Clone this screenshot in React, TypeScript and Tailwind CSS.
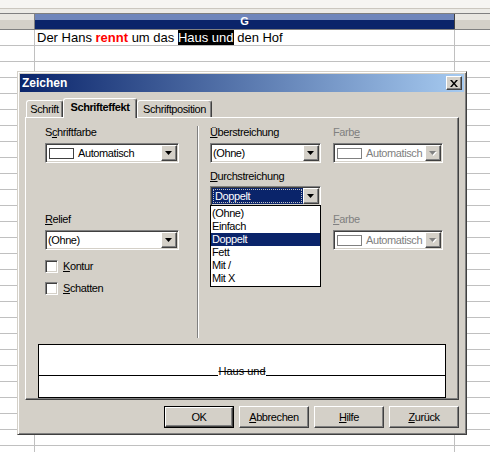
import type { ReactNode } from 'react'

const sunken =
  'border border-t-[#808080] border-l-[#808080] border-r-white border-b-white shadow-[inset_1px_1px_#404040,inset_-1px_-1px_#d4d0c8]'
const raised =
  'border border-t-white border-l-white border-r-[#404040] border-b-[#404040] shadow-[inset_-1px_-1px_#808080]'

const rows = Array.from({ length: 27 }, (_, i) => i)

function Arrow ({ disabled }: { disabled?: boolean }) {
  return (
    <svg width="8" height="5" viewBox="0 0 8 5">
      {disabled && <path d="M1 1h7l-3.5 4z" fill="#ffffff" />}
      <path d="M0 0h7l-3.5 4z" fill={disabled ? '#808080' : '#000000'} />
    </svg>
  )
}

function Combo ({ children, disabled, focused }: { children: ReactNode, disabled?: boolean, focused?: boolean }) {
  return (
    <div className={`flex h-[20px] w-full bg-white p-[1px] ${sunken}`}>
      <div className={`flex flex-1 items-center min-w-0 overflow-hidden whitespace-nowrap ${disabled ? 'text-[#808080]' : 'text-black'}`}>
        {focused
          ? (
            <div className="flex h-full flex-1 items-center bg-[#0a246a] p-[1px] text-white">
              <div className="flex h-full flex-1 items-center border border-dotted border-[#c0c0c0] pl-[1px]">{children}</div>
            </div>
            )
          : children}
      </div>
      <div className={`flex h-full w-[16px] shrink-0 items-center justify-center bg-[#d4d0c8] ${raised}`}>
        <Arrow disabled={disabled} />
      </div>
    </div>
  )
}

function ColorValue ({ disabled }: { disabled?: boolean }) {
  return (
    <div className="flex items-center gap-[4px] pl-[2px]">
      <span className={`h-[11px] w-[25px] shrink-0 border ${disabled ? 'border-[#808080]' : 'border-[#404040]'} bg-white`} />
      <span>Automatisch</span>
    </div>
  )
}

function Label ({ pre = '', u, post = '', disabled }: { pre?: string, u: string, post?: string, disabled?: boolean }) {
  return (
    <div className={`h-[13px] leading-[13px] ${disabled ? 'text-[#808080]' : 'text-black'}`}>
      {pre}<span className="underline underline-offset-[1px]">{u}</span>{post}
    </div>
  )
}

function Check ({ u, post }: { u: string, post: string }) {
  return (
    <div className="flex h-[13px] items-center gap-[5px]">
      <span className={`h-[13px] w-[13px] bg-white ${sunken}`} />
      <span className="leading-[13px]">
        <span className="underline underline-offset-[1px]">{u}</span>{post}
      </span>
    </div>
  )
}

function Tab ({ children, active, w }: { children: ReactNode, active?: boolean, w: string }) {
  return (
    <div
      className={`flex items-center justify-center rounded-t-[3px] border border-b-0 border-t-white border-l-white border-r-[#404040] bg-[#d4d0c8] shadow-[inset_-1px_0_#808080] ${w} ${
        active ? 'relative z-10 h-[20px] pb-[2px] font-bold' : 'mb-px h-[17px]'
      }`}
    >
      {children}
    </div>
  )
}

function Button ({ u = '', post, isDefault }: { u?: string, post: string, isDefault?: boolean }) {
  return (
    <div className={`h-[22px] w-[70px] ${isDefault ? 'border border-black' : ''}`}>
      <div className={`flex h-full w-full items-center justify-center bg-[#d4d0c8] ${raised}`}>
        <span>
          {u && <span className="underline underline-offset-[1px]">{u}</span>}{post}
        </span>
      </div>
    </div>
  )
}

const strikeOptions = ['(Ohne)', 'Einfach', 'Doppelt', 'Fett', 'Mit /', 'Mit X']

export default function App () {
  return (
    <div className="relative h-[452px] w-[490px] overflow-hidden bg-white font-['Liberation_Sans',Arial,sans-serif]">
      {/* spreadsheet behind the dialog */}
      <div className="h-[8px] bg-[#f6f5f2]" />
      <div className="h-px bg-[#cbc7bf]" />
      <div className="h-[4px] bg-[#ecebe6]" />
      <div className="flex h-[17px] border-t border-b border-[#808080]">
        <div className="w-[35px] border-r border-[#808080] bg-[linear-gradient(#e9e7e1_0,#e9e7e1_6px,#d4d0c8_6px)]" />
        <div className="flex w-[420px] items-center justify-center border-r border-[#404040] bg-[linear-gradient(#6f86bb_0,#6f86bb_6px,#0a246a_6px)] text-[11px] font-bold text-white">
          G
        </div>
        <div className="flex-1 bg-[linear-gradient(#e9e7e1_0,#e9e7e1_6px,#d4d0c8_6px)]" />
      </div>
      {rows.map((r) => (
        <div key={r} className="flex h-[16px] border-b border-[#c0c0c0] first:h-[15px]">
          <div className="w-[35px] border-r border-[#c0c0c0]" />
          <div className="flex w-[420px] items-center border-r border-[#c0c0c0] pl-[2px] text-[13px] leading-[15px] text-black">
            {r === 0 && (
              <span className="whitespace-pre">
                Der Hans <span className="font-bold text-[#ff0000]">rennt</span> um das{' '}
                <span className="bg-black text-white">Haus und</span> den Hof
              </span>
            )}
          </div>
          <div className="flex-1" />
        </div>
      ))}

      {/* Zeichen dialog */}
      <div className="absolute left-[17px] top-[71px] flex h-[364px] w-[450px] flex-col border border-t-[#d4d0c8] border-l-[#d4d0c8] border-r-[#404040] border-b-[#404040] bg-[#d4d0c8] p-[2px] text-[11px] tracking-[-0.4px] text-black shadow-[inset_1px_1px_#ffffff,inset_-1px_-1px_#808080]">
        <div className="flex h-[18px] items-center justify-between bg-[linear-gradient(90deg,#0a246a,#a6caf0)] pl-[2px] pr-[2px]">
          <span className="text-[12px] font-bold tracking-normal text-white">Zeichen</span>
          <div className={`flex h-[14px] w-[16px] items-center justify-center bg-[#d4d0c8] ${raised}`}>
            <svg width="8" height="7" viewBox="0 0 8 7">
              <path d="M0 0h2l2 2.5 2-2.5h2l-3 3.5 3 3.5h-2l-2-2.5-2 2.5h-2l3-3.5z" fill="#000" />
            </svg>
          </div>
        </div>

        <div className="mt-[6px] ml-[6px] -mb-px flex h-[20px] items-end">
          <Tab w="w-[37px]">Schrift</Tab>
          <Tab w="w-[74px]" active>Schrifteffekt</Tab>
          <Tab w="w-[75px]">Schriftposition</Tab>
        </div>

        <div className="mx-[5px] flex h-[283px] flex-col border border-t-white border-l-white border-r-[#404040] border-b-[#404040] shadow-[inset_-1px_-1px_#808080]">
          <div className="mt-[8px] flex h-[212px] pl-[19px]">
            {/* left column */}
            <div className="flex w-[134px] flex-col">
              <Label pre="S" u="c" post="hriftfarbe" />
              <div className="mt-[4px]">
                <Combo><ColorValue /></Combo>
              </div>
              <div className="mt-[50px]">
                <Label u="R" post="elief" />
              </div>
              <div className="mt-[4px]">
                <Combo><span className="pl-[1px]">(Ohne)</span></Combo>
              </div>
              <div className="mt-[10px] flex flex-col gap-[9px]">
                <Check u="K" post="ontur" />
                <Check u="S" post="chatten" />
              </div>
            </div>

            <div className="ml-[18px] h-full w-[2px] border-l border-[#808080] bg-white" />

            {/* strike-through and overline */}
            <div className="ml-[11px] flex w-[111px] flex-col">
              <Label u="Ü" post="berstreichung" />
              <div className="mt-[4px]">
                <Combo><span className="pl-[1px]">(Ohne)</span></Combo>
              </div>
              <div className="mt-[7px]">
                <Label u="D" post="urchstreichung" />
              </div>
              <div className="relative mt-[3px]">
                <Combo focused>Doppelt</Combo>
                <div className="absolute left-0 top-[19px] z-20 w-full border border-black bg-white pt-px pb-px">
                  {strikeOptions.map((o) => (
                    <div
                      key={o}
                      className={`h-[13px] pl-[1px] leading-[13px] ${o === 'Doppelt' ? 'bg-[#0a246a] text-white' : ''}`}
                    >
                      {o}
                    </div>
                  ))}
                </div>
              </div>
            </div>

            {/* colours, disabled */}
            <div className="ml-[12px] flex w-[110px] flex-col">
              <Label pre="Farb" u="e" disabled />
              <div className="mt-[4px]">
                <Combo disabled><ColorValue disabled /></Combo>
              </div>
              <div className="mt-[50px]">
                <Label u="F" post="arbe" disabled />
              </div>
              <div className="mt-[4px]">
                <Combo disabled><ColorValue disabled /></Combo>
              </div>
            </div>
          </div>

          <div className="mx-[12px] mt-[6px] h-[54px] border border-black bg-white">
            <div className="flex h-[31px] items-end">
              <div className="h-px flex-1 bg-black" />
              <span className="translate-y-[1px] text-[11px] leading-[11px] tracking-normal line-through">Haus und</span>
              <div className="h-px flex-1 bg-black" />
            </div>
          </div>
        </div>

        <div className="mt-[6px] flex justify-end gap-[5px] pr-[5px]">
          <Button post="OK" isDefault />
          <Button u="A" post="bbrechen" />
          <Button u="H" post="ilfe" />
          <Button u="Z" post="urück" />
        </div>
      </div>
    </div>
  )
}
